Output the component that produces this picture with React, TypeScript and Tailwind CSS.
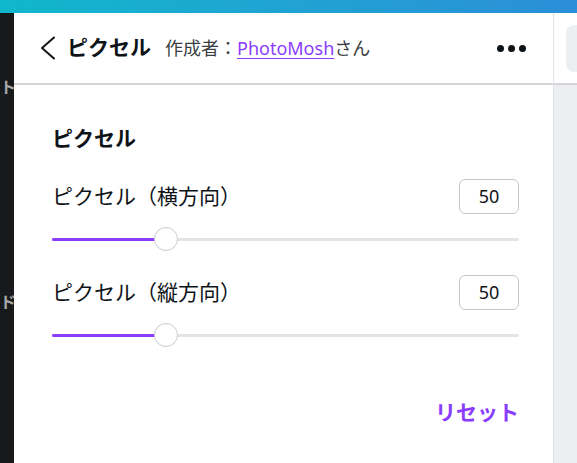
const jp = { fontFamily: '"Noto Sans", "Noto Sans CJK JP", sans-serif' };

function Slider({ label }: { label: string }) {
  return (
    <div>
      <div className="flex items-center justify-between h-[35px]">
        <span className="text-[21px] text-[#0e1318]">{label}</span>
        <div className="w-[60px] h-[35px] rounded-[6px] border border-[#c4c7cc] flex items-center justify-center text-[18px] text-[#0e1318]">
          50
        </div>
      </div>
      <div className="relative h-[24px] mt-[13px] flex items-center">
        <div className="w-full h-[3px] rounded-full bg-[#e3e4e7]" />
        <div className="absolute left-0 top-[10.5px] h-[3px] w-[114px] rounded-full bg-[#8b3dff]" />
        <div className="absolute left-[102px] top-0 w-[24px] h-[24px] rounded-full bg-white border border-[#c9cbcf]" />
      </div>
    </div>
  );
}

export default function App() {
  return (
    <div className="w-[577px] h-[463px] overflow-hidden flex flex-col bg-white" style={jp}>
      <div className="h-[13px] bg-gradient-to-r from-[#0fb7cb] to-[#2b8ed8]" />
      <div className="flex flex-1">
        <div className="w-[14px] bg-[#18191b] relative overflow-hidden">
          <span className="absolute right-[-2px] top-[62px] text-[16px] font-bold text-[#a7a8aa]">ト</span>
          <span className="absolute right-[-2px] top-[277px] text-[16px] font-bold text-[#a7a8aa]">ド</span>
        </div>
        <div className="w-[540px] border-r border-[#e1e3e6] flex flex-col">
          <div className="h-[72px] border-b-2 border-[#d3d4d6] flex items-center pl-[26px] pr-[27px]">
            <svg width="16" height="24" viewBox="0 0 16 24" className="text-[#0e1318]">
              <polyline points="14,1.5 2,12 14,22.5" fill="none" stroke="currentColor" strokeWidth="2" strokeLinecap="round" strokeLinejoin="round" />
            </svg>
            <span className="ml-[11px] text-[21px] font-bold text-[#0e1318]">ピクセル</span>
            <span className="ml-[14px] text-[18px] text-[#3b3f44]">
              作成者：<span className="text-[#8b3dff] underline underline-offset-[3px]">PhotoMosh</span>さん
            </span>
            <div className="ml-auto flex gap-[4px]">
              <span className="w-[7px] h-[7px] rounded-full bg-[#0e1318]" />
              <span className="w-[7px] h-[7px] rounded-full bg-[#0e1318]" />
              <span className="w-[7px] h-[7px] rounded-full bg-[#0e1318]" />
            </div>
          </div>
          <div className="pl-[38px] pr-[34px] pt-[38px] flex flex-col">
            <h2 className="text-[21px] font-bold text-[#0e1318] leading-[30px]">ピクセル</h2>
            <div className="mt-[26px]">
              <Slider label="ピクセル（横方向）" />
            </div>
            <div className="mt-[24px]">
              <Slider label="ピクセル（縦方向）" />
            </div>
            <div className="mt-[50px] flex justify-end">
              <span className="text-[21px] font-bold text-[#8b3dff]">リセット</span>
            </div>
          </div>
        </div>
        <div className="flex-1 flex flex-col">
          <div className="h-[72px] bg-white border-b-2 border-[#d3d4d6] pl-[12px] pt-[12px]">
            <div className="h-[47px] rounded-l-[8px] bg-[#eceef1]" />
          </div>
          <div className="flex-1 bg-[#eceef1]" />
        </div>
      </div>
    </div>
  );
}
